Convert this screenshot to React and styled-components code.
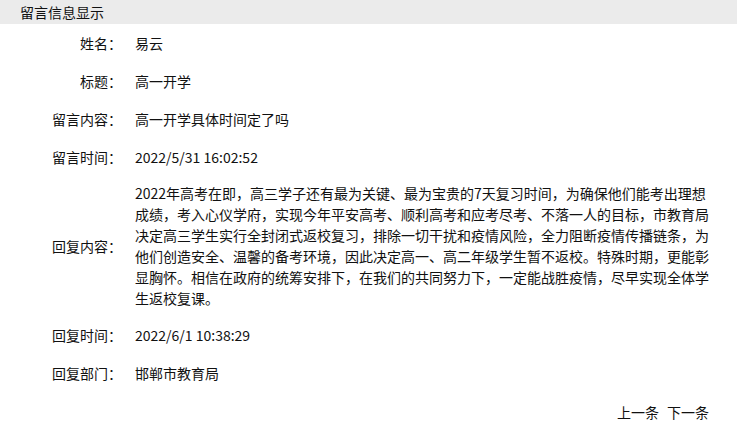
import React from "react";
import styled, { createGlobalStyle } from "styled-components";

const Global = createGlobalStyle`
  html, body { margin: 0; padding: 0; background: #fff; }
  body {
    font-family: "Noto Sans CJK SC", "Noto Sans", sans-serif;
    font-size: 14px;
    color: #111;
  }
`;

const Page = styled.div`
  width: 737px;
`;

const Header = styled.div`
  height: 24px;
  background: #ebebeb;
  padding-left: 20px;
  display: flex;
  align-items: center;
  font-size: 14px;
  line-height: 24px;
  color: #111;
`;

const Table = styled.div`
  display: flex;
  flex-direction: column;
`;

const Row = styled.div`
  display: grid;
  grid-template-columns: 122px 576px;
  column-gap: 13px;
  align-items: center;
  min-height: 38px;
  padding: ${(p) => (p.$multi ? "7px 0" : "0")};
  box-sizing: border-box;
  line-height: 21px;
`;

const Label = styled.div`
  text-align: right;
  white-space: nowrap;
`;

const Value = styled.div`
  word-break: break-all;
`;

const Nav = styled.div`
  width: 709px;
  display: flex;
  justify-content: flex-end;
  gap: 8px;
  margin-top: 10px;
  line-height: 21px;
`;

const NavLink = styled.a`
  color: #111;
  text-decoration: none;
  cursor: pointer;
`;

const rows = [
  ["姓名：", "易云"],
  ["标题：", "高一开学"],
  ["留言内容：", "高一开学具体时间定了吗"],
  ["留言时间：", "2022/5/31 16:02:52"],
  [
    "回复内容：",
    "2022年高考在即，高三学子还有最为关键、最为宝贵的7天复习时间，为确保他们能考出理想成绩，考入心仪学府，实现今年平安高考、顺利高考和应考尽考、不落一人的目标，市教育局决定高三学生实行全封闭式返校复习，排除一切干扰和疫情风险，全力阻断疫情传播链条，为他们创造安全、温馨的备考环境，因此决定高一、高二年级学生暂不返校。特殊时期，更能彰显胸怀。相信在政府的统筹安排下，在我们的共同努力下，一定能战胜疫情，尽早实现全体学生返校复课。",
    true,
  ],
  ["回复时间：", "2022/6/1 10:38:29"],
  ["回复部门：", "邯郸市教育局"],
];

export default function App() {
  return (
    <Page>
      <Global />
      <Header>留言信息显示</Header>
      <Table>
        {rows.map(([l, v, multi]) => (
          <Row key={l} $multi={multi}>
            <Label>{l}</Label>
            <Value>{v}</Value>
          </Row>
        ))}
      </Table>
      <Nav>
        <NavLink>上一条</NavLink>
        <NavLink>下一条</NavLink>
      </Nav>
    </Page>
  );
}
